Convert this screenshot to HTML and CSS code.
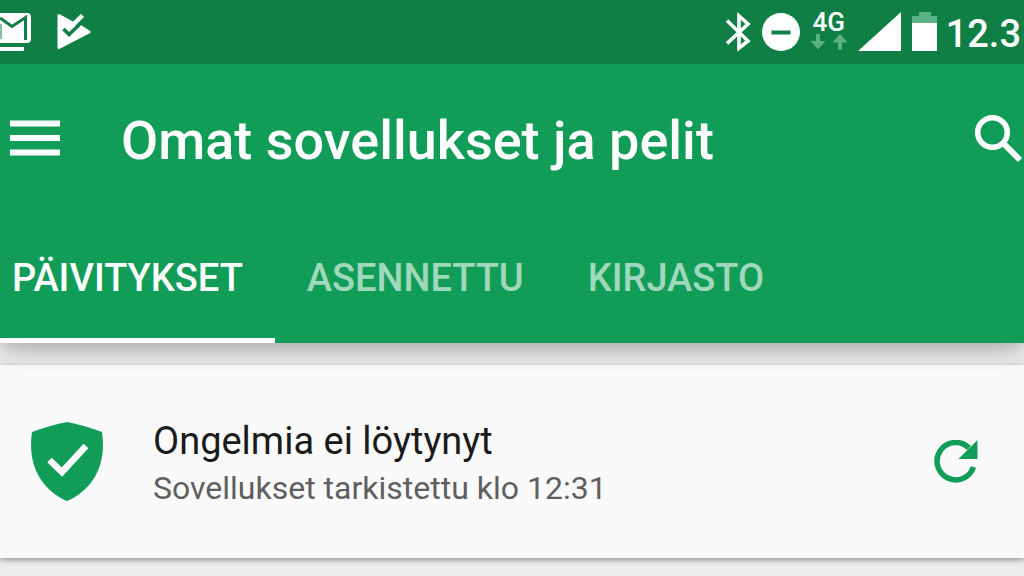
FILE: index.html
```html
<!DOCTYPE html>
<html lang="fi">
<head>
<meta charset="utf-8">
<meta name="viewport" content="width=device-width, initial-scale=1">
<title>Omat sovellukset ja pelit</title>
<link rel="stylesheet" href="styles.css">
</head>
<body>
<div class="status-bar">
  <div class="status-group">
    <svg class="mail-icon" width="32" height="64" viewBox="0 0 32 64" aria-hidden="true">
      <path fill="#fff" d="M0 13h27q4 0 4 4v22q0 4-4 4H0zM0 47h24v4H0z"/>
      <path fill="none" stroke="#0f7f46" stroke-width="3" d="M0 18l12 8.500 13.500-9V40"/>
      <path fill="none" stroke="#0f7f46" stroke-width="1" d="M1 24v15"/>
    </svg>
    <svg class="play-icon" width="36" height="64" viewBox="0 0 36 64" aria-hidden="true">
      <path fill="#fff" stroke="#fff" stroke-width="3" stroke-linejoin="round" d="M3 15.500v32L33 32z"/>
      <path fill="#0f7f46" d="M12 19l5 5 8-9 6 3 5 11-7-4-5 4-6-5-6-5z"/>
      <path fill="#fff" d="M10 18l9 6-3 9-8-7zM23 27l2-2 9 6-9 6z"/>
      <path fill="none" stroke="#0f7f46" stroke-width="3.600" d="M7.500 29l5.500 5.500L27 21"/>
      <path fill="none" stroke="#fff" stroke-width="4.500" d="M12 29.500l14.500-14"/>
    </svg>
  </div>
  <div class="status-group status-right">
    <svg width="28" height="64" viewBox="0 0 28 64" aria-hidden="true">
      <path fill="none" stroke="#fff" stroke-width="3.600" d="M3 20.500L24 41l-9 7V16l9 8L3 43.500"/>
    </svg>
    <svg class="dnd-icon" width="38" height="64" viewBox="0 0 38 64" aria-hidden="true">
      <circle cx="19" cy="32" r="19" fill="#fff"/>
      <path fill="#0f7f46" d="M9.500 30.500h19v4h-19z"/>
    </svg>
    <div class="network">
      <span class="network-type">4G</span>
      <svg width="38" height="16" viewBox="0 0 38 16" aria-hidden="true">
        <path fill="#59b384" d="M6 0h4v7h5.500L8 15.500.500 7H6zM28 15.500h4v-7h5.500L30 0l-7.500 8.500H28z"/>
      </svg>
    </div>
    <svg class="signal-icon" width="44" height="64" viewBox="0 0 44 64" aria-hidden="true">
      <path fill="#fff" d="M43 12v39H0z"/>
    </svg>
    <svg class="battery-icon" width="26" height="64" viewBox="0 0 26 64" aria-hidden="true">
      <path fill="#59b384" d="M7 12h12v4h6v7H0v-7h7z"/>
      <path fill="#fff" d="M0 23h25v28H0z"/>
    </svg>
    <span class="clock">12.3</span>
  </div>
</div>
<header class="app-header">
  <div class="toolbar">
    <button class="icon-button" type="button" aria-label="Valikko">
      <svg width="52" height="52" viewBox="0 0 52 52" aria-hidden="true">
        <path fill="#fff" d="M1 8.500h50v6H1zM1 23h50v6H1zM1 37.500h50v6H1z"/>
      </svg>
    </button>
    <h1 class="title">Omat sovellukset ja pelit</h1>
    <button class="icon-button" type="button" aria-label="Haku">
      <svg width="52" height="52" viewBox="0 0 52 52" aria-hidden="true">
        <circle cx="20.500" cy="20.500" r="14.800" fill="none" stroke="#fff" stroke-width="5.500"/>
        <path fill="none" stroke="#fff" stroke-width="6" d="M30.500 30.500L48 48"/>
      </svg>
    </button>
  </div>
  <nav class="tabs">
    <a class="tab tab-active" href="#paivitykset" aria-current="page">PÄIVITYKSET</a>
    <a class="tab" href="#asennettu">ASENNETTU</a>
    <a class="tab" href="#kirjasto">KIRJASTO</a>
  </nav>
</header>
<main class="content">
  <section class="card">
    <svg class="shield" width="72" height="80" viewBox="0 0 72 80" aria-hidden="true">
      <path fill="#119d58" d="M36 0Q52 3 71 10C76 44 61 68 36 79 11 68-4 44 1 10Q20 3 36 0z"/>
      <path fill="none" stroke="#fafafa" stroke-width="6.500" d="M18.500 38l12.500 12 24-26"/>
    </svg>
    <div class="card-text">
      <h2 class="card-title">Ongelmia ei löytynyt</h2>
      <p class="card-subtitle">Sovellukset tarkistettu klo 12:31</p>
    </div>
    <button class="icon-button" type="button" aria-label="Päivitä">
      <svg width="44" height="44" viewBox="0 0 44 44" aria-hidden="true">
        <path fill="none" stroke="#119d58" stroke-width="5.500" d="M39.500 27A18.700 18.700 0 1 1 35 8"/>
        <path fill="#119d58" d="M43.500 0v19h-19z"/>
      </svg>
    </button>
  </section>
</main>
</body>
</html>
```

FILE: styles.css
```css
* {
  box-sizing: border-box;
}

body {
  margin: 0;
  min-height: 100vh;
  background: #eceeed;
  color: #fff;
  font-family: Roboto, "Noto Sans", sans-serif;
  overflow-x: hidden;
}

h1,
h2,
p {
  margin: 0;
}

svg {
  display: block;
  flex: none;
}

.status-bar {
  position: relative;
  z-index: 1;
  display: flex;
  justify-content: space-between;
  height: 64px;
  background: #0f7f46;
}

.status-group {
  display: flex;
  align-items: center;
}

.play-icon {
  margin-left: 24px;
}

.status-right {
  padding-right: 3px;
}

.dnd-icon {
  margin-left: 10px;
}

.network {
  display: flex;
  flex-direction: column;
  align-items: center;
  margin-left: 10px;
  padding-bottom: 4px;
}

.network-type {
  font-size: 26px;
  font-weight: 500;
  line-height: 24px;
}

.signal-icon {
  margin-left: 10px;
}

.battery-icon {
  margin-left: 10px;
}

.clock {
  margin-left: 8px;
  padding-top: 4px;
  font-size: 38px;
  font-weight: 500;
  line-height: 64px;
}

.app-header {
  position: relative;
  background: #119d58;
  box-shadow: 0 2px 26px rgba(0, 0, 0, 0.4);
}

.toolbar {
  display: flex;
  align-items: center;
  height: 148px;
  padding: 0 0 0 9px;
}

.icon-button {
  flex: none;
  padding: 0;
  border: 0;
  background: none;
  cursor: pointer;
}

.title {
  flex: 1;
  padding: 6px 0 0 60px;
  font-size: 54px;
  font-weight: 500;
  line-height: 64px;
  white-space: nowrap;
}

.tabs {
  display: flex;
  height: 131px;
}

.tab {
  padding: 0 32px;
  border-bottom: 5px solid transparent;
  color: #a0d8bc;
  font-size: 38px;
  font-weight: 500;
  line-height: 132px;
  text-decoration: none;
}

.tab-active {
  padding-left: 12px;
  border-bottom-color: #fff;
  color: #fff;
}

.content {
  padding-top: 22px;
}

.card {
  display: flex;
  align-items: center;
  min-height: 193px;
  padding: 0 46px 0 31px;
  background: #fafafa;
  box-shadow: 0 2px 6px rgba(0, 0, 0, 0.4);
}

.card-text {
  flex: 1;
  padding: 4px 0 0 50px;
}

.card-title {
  color: #1b1b1b;
  font-size: 38px;
  font-weight: 400;
  line-height: 48px;
}

.card-subtitle {
  color: #5f5f5f;
  font-size: 32px;
  line-height: 46px;
}
```
